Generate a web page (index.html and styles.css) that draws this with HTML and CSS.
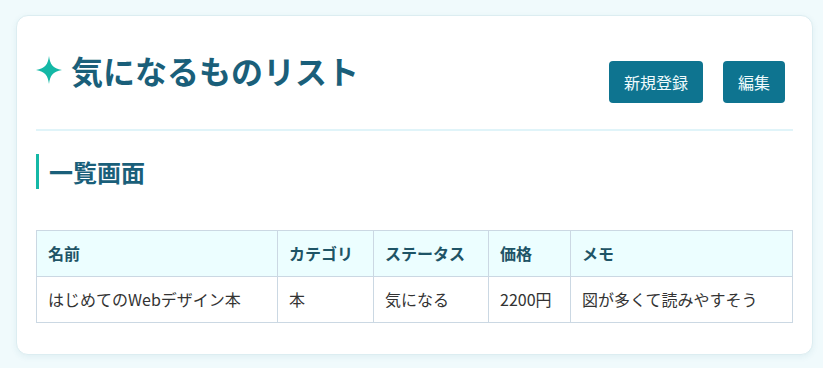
FILE: index.html
```html
<!DOCTYPE html>
<html lang="ja">
<head>
<meta charset="utf-8">
<title>気になるものリスト</title>
<link rel="stylesheet" href="styles.css">
</head>
<body>
<main class="card">
  <header class="header">
    <h1 class="title">
      <svg class="star" viewBox="0 0 26 28" width="26" height="28" aria-hidden="true">
        <path d="M13 0 C14.2 8.5 16.5 12 26 14 C16.5 16 14.2 19.5 13 28 C11.8 19.5 9.5 16 0 14 C9.5 12 11.8 8.5 13 0 Z" fill="#14b8a6"/>
      </svg>
      <span>気になるものリスト</span>
    </h1>
    <div class="actions">
      <button class="btn">新規登録</button>
      <button class="btn">編集</button>
    </div>
  </header>
  <h2 class="section">一覧画面</h2>
  <table class="list">
    <colgroup>
      <col class="c-name"><col class="c-cat"><col class="c-status"><col class="c-price"><col class="c-memo">
    </colgroup>
    <thead>
      <tr><th>名前</th><th>カテゴリ</th><th>ステータス</th><th>価格</th><th>メモ</th></tr>
    </thead>
    <tbody>
      <tr><td>はじめてのWebデザイン本</td><td>本</td><td>気になる</td><td>2200円</td><td>図が多くて読みやすそう</td></tr>
    </tbody>
  </table>
</main>
</body>
</html>
```

FILE: styles.css
```css
html, body {
  margin: 0;
  padding: 0;
}
body {
  background: #f0fafc;
  font-family: "Noto Sans CJK JP", "Noto Sans", sans-serif;
  color: #333;
  padding: 15px 10px 15px 16px;
}
.card {
  background: #fff;
  border: 1px solid #dcedf1;
  border-radius: 12px;
  box-shadow: 0 2px 6px rgba(40, 120, 140, 0.08);
  padding: 0 19px 31px 19px;
}
.header {
  display: flex;
  justify-content: space-between;
  align-items: flex-start;
  border-bottom: 2px solid #e0f4f9;
  padding-top: 30px;
  padding-bottom: 26px;
}
.title {
  margin: 0;
  display: flex;
  align-items: center;
  gap: 9px;
  font-size: 32px;
  line-height: 48px;
  font-weight: 700;
  color: #1a5f7a;
}
.star {
  display: block;
  margin-top: -1px;
}
.actions {
  display: flex;
  gap: 20px;
  margin-top: 15px;
  margin-right: 8px;
}
.btn {
  font-family: inherit;
  font-size: 16px;
  line-height: 24px;
  padding: 9px 15px;
  border: 0;
  border-radius: 4px;
  background: #0e7490;
  color: #f0fbfd;
  cursor: pointer;
}
.section {
  margin: 23px 0 41px 0;
  border-left: 3px solid #14b8a6;
  padding-left: 10px;
  font-size: 24px;
  line-height: 35px;
  font-weight: 700;
  color: #1a5f7a;
}
.list {
  width: 100%;
  border-collapse: collapse;
  table-layout: fixed;
  font-size: 16px;
  line-height: 21px;
}
.c-name { width: 241px; }
.c-cat { width: 96px; }
.c-status { width: 115px; }
.c-price { width: 82px; }
.list th, .list td {
  border: 1px solid #cbd8e3;
  padding: 12px 11px;
  text-align: left;
  white-space: nowrap;
}
.list th {
  background: #ecfeff;
  color: #1e5466;
  font-weight: 700;
}
.list td {
  color: #333;
  font-weight: 400;
}
```
